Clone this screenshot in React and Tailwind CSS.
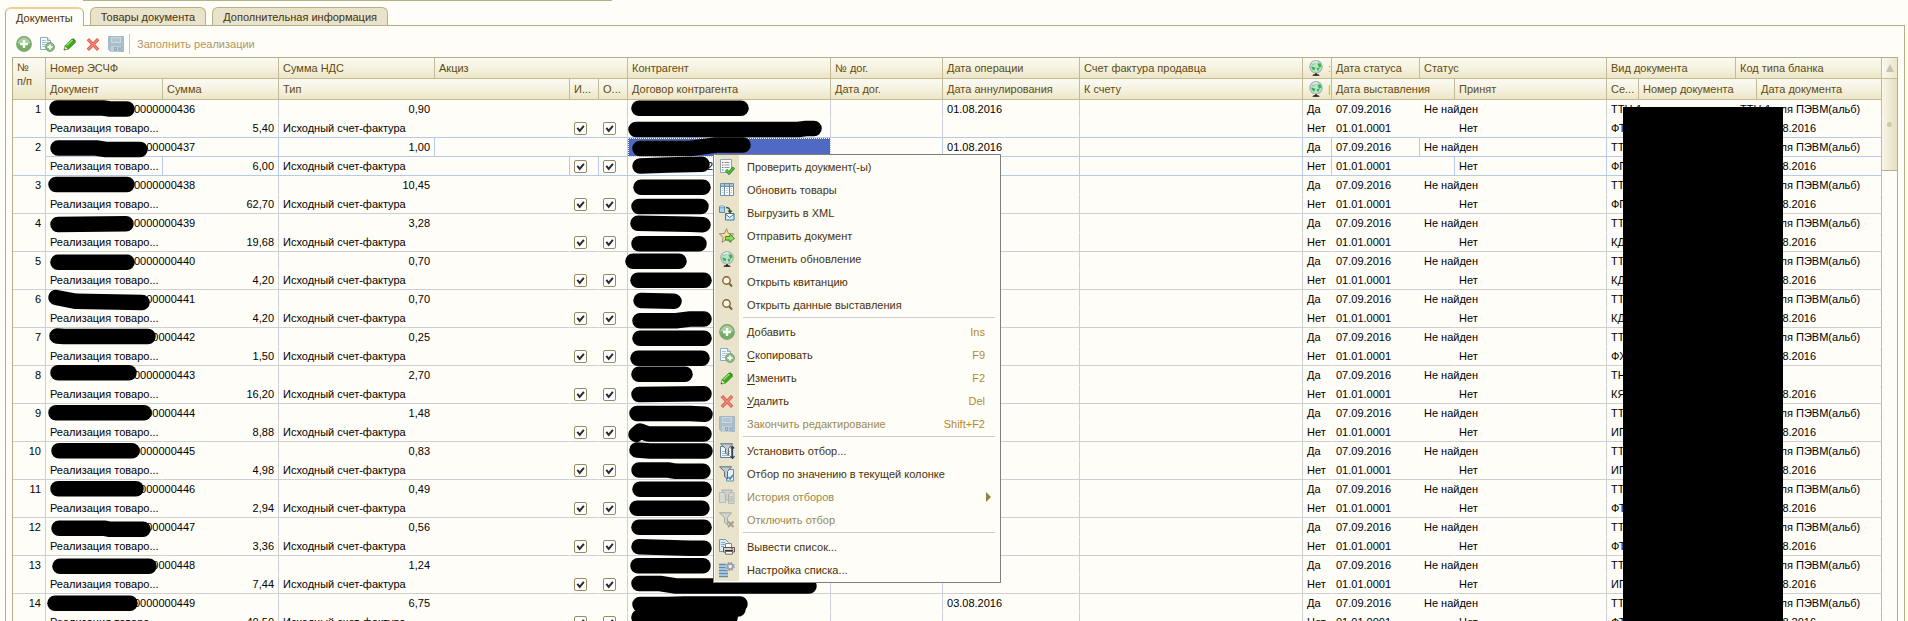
import React from "react";

const rows = [
  { n: 1, num: "0000000436", vat: "0,90", sum: "5,40", date: "01.08.2016", kind: "ТТН-1", ser: "ФТ" },
  { n: 2, num: "0000000437", vat: "1,00", sum: "6,00", date: "01.08.2016", kind: "ТТН-1", ser: "ФП" },
  { n: 3, num: "0000000438", vat: "10,45", sum: "62,70", date: "", kind: "ТТН-1", ser: "ФП" },
  { n: 4, num: "0000000439", vat: "3,28", sum: "19,68", date: "", kind: "ТТН-1", ser: "КД" },
  { n: 5, num: "0000000440", vat: "0,70", sum: "4,20", date: "", kind: "ТТН-1", ser: "КД" },
  { n: 6, num: "0000000441", vat: "0,70", sum: "4,20", date: "", kind: "ТТН-1", ser: "КД" },
  { n: 7, num: "0000000442", vat: "0,25", sum: "1,50", date: "", kind: "ТТН-1", ser: "ФХ" },
  { n: 8, num: "0000000443", vat: "2,70", sum: "16,20", date: "", kind: "ТН-2", ser: "КЯ" },
  { n: 9, num: "0000000444", vat: "1,48", sum: "8,88", date: "", kind: "ТТН-1", ser: "ИП" },
  { n: 10, num: "0000000445", vat: "0,83", sum: "4,98", date: "", kind: "ТТН-1", ser: "ИП" },
  { n: 11, num: "0000000446", vat: "0,49", sum: "2,94", date: "", kind: "ТТН-1", ser: "ФТ" },
  { n: 12, num: "0000000447", vat: "0,56", sum: "3,36", date: "", kind: "ТТН-1", ser: "ФТ" },
  { n: 13, num: "0000000448", vat: "1,24", sum: "7,44", date: "", kind: "ТТН-1", ser: "ИП" },
  { n: 14, num: "0000000449", vat: "6,75", sum: "40,50", date: "03.08.2016", kind: "ТТН-1", ser: "ФТ" },
];

const Svg = ({ children, dim }) => (
  <svg viewBox="0 0 16 16" className={dim ? "block size-4 shrink-0 opacity-50" : "block size-4 shrink-0"} aria-hidden="true">
    {children}
  </svg>
);

const AddIcon = () => (
  <Svg>
    <circle cx="8" cy="8" r="7.3" fill="#6fb35c" stroke="#8b9a86" strokeWidth="1.2" />
    <path d="M1.6 8a6.4 6.4 0 0 1 12.8 0Q8 5 1.6 8Z" fill="#a5d596" />
    <path d="M8 4v8M4 8h8" stroke="#fff" strokeWidth="2.4" />
  </Svg>
);
const CopyIcon = () => (
  <Svg>
    <path d="M1.500 1.500h7l3 3v9h-10z" fill="#f4f9fd" stroke="#8fabc2" />
    <path d="M8.500 1.500v3h3" fill="#d4e3ef" stroke="#8fabc2" />
    <path d="M3 4.500h4M3 6.500h6M3 8.500h4M3 10.500h3" stroke="#a9c4d8" />
    <circle cx="11" cy="11" r="4.400" fill="#86bf76" stroke="#80967a" />
    <path d="M11 8.500v5M8.500 11h5" stroke="#fff" strokeWidth="1.800" />
  </Svg>
);
const PencilIcon = () => (
  <Svg>
    <path d="M2 14l1.200-4.500 6.800-6.500 3.500 3.300-7 6.700z" fill="#3fa81f" stroke="#2c7a18" strokeWidth=".8" />
    <path d="M4.500 9.500L10.500 4" stroke="#9be07a" strokeWidth="1.400" />
    <path d="M10 3l1.400-.8 2.500 2.600-.6 1.500z" fill="#2f8f1c" />
    <path d="M2 14l1-3.700 2.800 2.700z" fill="#f0e6b8" />
    <path d="M2 14l.5-1.600 1.200 1.200z" fill="#222" />
  </Svg>
);
const DeleteIcon = () => (
  <Svg>
    <path d="M4 4.300l8 8.400M12 4.300l-8 8.400" stroke="#cf5a49" strokeWidth="3.300" strokeLinecap="square" />
    <path d="M4 4.300l8 8.400M12 4.300l-8 8.400" stroke="#f48275" strokeWidth="1.900" strokeLinecap="square" />
  </Svg>
);
const SaveIcon = () => (
  <Svg>
    <path d="M.5.5h15v15h-13l-2-2z" fill="#a9bfcb" stroke="#a3b8c4" />
    <path d="M3 1h10v6H3z" fill="#cad7de" />
    <path d="M4 3h8M4 5h8" stroke="#9fb4c1" />
    <path d="M3 10h10v6H3z" fill="#c0ced7" />
    <path d="M6.500 11.500h2v3h-2zM11 11v4.500M14 11l-2.500 2.200L14 15.500" fill="none" stroke="#8ba2b1" />
  </Svg>
);
const CheckDocIcon = () => (
  <Svg>
    <path d="M1.500.5h11v13h-11z" fill="#f7fbfd" stroke="#8aa5b8" />
    <path d="M3 3.500h1.500M3 8.500h1.500" stroke="#d0503c" strokeWidth="1.200" />
    <path d="M3 6h1.500M3 11h1.500" stroke="#4a9a3a" strokeWidth="1.200" />
    <path d="M5.500 3.500h5M5.500 6h5M5.500 8.500h5" stroke="#8b98a2" />
    <path d="M7 11l3 3 5-5.500" fill="none" stroke="#2f7d1d" strokeWidth="3" />
    <path d="M7 11l3 3 5-5.500" fill="none" stroke="#58bb35" strokeWidth="1.800" />
  </Svg>
);
const TableIcon = () => (
  <Svg>
    <path d="M1.500 1.500h13v12h-13z" fill="#fbfdfe" stroke="#6d8fa6" />
    <path d="M2 2h12v2H2z" fill="#a9c3d5" />
    <path d="M2 4.500h12M5.500 2v11M10.500 2v11" stroke="#6d8fa6" />
    <path d="M3 6.500h1.500M3 8.500h1.500M3 10.500h1.500M7 6.500h2M7 8.500h2M7 10.500h2M11.500 6.500H13M11.500 8.500H13M11.500 10.500H13" stroke="#b7cbd9" />
  </Svg>
);
const ExportIcon = () => (
  <Svg>
    <path d="M.5 1.500h5v6h-5z" fill="#a9d3ee" stroke="#5b8aae" />
    <ellipse cx="3" cy="1.800" rx="2.500" ry="1" fill="#d8ecf8" stroke="#5b8aae" strokeWidth=".7" />
    <path d="M7 2.500q4 0 4 4" fill="none" stroke="#3d5a34" strokeWidth="1.400" />
    <path d="M8.500 5.500h5L11 8.800z" fill="#2f4f28" />
    <path d="M6.500 8.500h8.500v6.500H6.500z" fill="#d9ecf7" stroke="#3e7299" />
    <path d="M6.500 9l4.200 3.500L15 9" fill="#fff" stroke="#3e7299" />
  </Svg>
);
const StarIcon = () => (
  <Svg>
    <path d="M7.500.8l2 4.700 5.200.4-4 3.400 1.300 5-4.500-2.800L3 14.300l1.200-5L.3 5.900l5.100-.4z" fill="#f6dc96" stroke="#918a76" />
    <path d="M6.500 8.500H11V6.300l4.500 4L11 14.200V12H6.500z" fill="#8fdc5d" stroke="#3f8a26" />
  </Svg>
);
const GlobeIcon = () => (
  <Svg>
    <circle cx="8" cy="6.800" r="6.200" fill="#c3ddd3" stroke="#a3b3aa" strokeWidth="1.200" />
    <path d="M3.500 3.800Q5.500 1.500 8 2L7 4.200 4.500 5.500z" fill="#8fd0a2" />
    <path d="M9.500 3.500l3 0 1 3-2.500 1.500zM3 6.500l4.200 1-.7 3-1.800-.7zM8.500 8h3L10 11.500z" fill="#2fb846" />
    <path d="M4.500 3.500a5 4 0 0 1 5-1.500" fill="none" stroke="#f1faf5" strokeWidth="1.200" />
    <path d="M7 13h2v1.300H7z" fill="#555" />
    <path d="M4.500 15.800Q4.500 14 8 14t3.500 1.800z" fill="#111" />
  </Svg>
);
const SearchIcon = () => (
  <Svg>
    <circle cx="7.500" cy="6.500" r="3.700" fill="#fbf6e6" stroke="#80602c" strokeWidth="1.400" />
    <path d="M10.200 9.500L13 12.500" stroke="#80602c" strokeWidth="2" />
  </Svg>
);
const Funnel = () => <path d="M.5.8h12L8.500 5.500V13l-3-2.500v-5z" fill="#c1cad0" stroke="#5f6d78" />;
const FilterSetIcon = () => (
  <Svg>
    <path d="M1.500 3.500h11v11h-11z" fill="#f3f8fb" stroke="#5e7f98" />
    <path d="M3 8.500h8M3 10.500h8M3 12.500h8" stroke="#9fb6c6" />
    <path d="M1.500.8h12L9.500 5.500V12l-3-2V5.500z" fill="#c4ccd2" stroke="#5f6d78" />
    <path d="M13.500 4v11M11.500 13l2 2.500 2-2.500M11.800 5.500l1.700-2 1.700 2" fill="none" stroke="#2e3d52" strokeWidth="1.200" />
  </Svg>
);
const FilterValueIcon = () => (
  <Svg>
    <path d="M7.500 3.500h7v11.500h-7z" fill="#e6f2fa" stroke="#5b8fb3" />
    <path d="M9.500 11l1.500 2 3-4" fill="none" stroke="#3c82b5" strokeWidth="1.500" />
    <Funnel />
  </Svg>
);
const FilterHistoryIcon = () => (
  <Svg dim>
    <path d="M.5 3.500h6v10h-6zM9.500 3.500h5.500v11H9.500z" fill="#c2d0da" stroke="#8196a6" />
    <path d="M10.500 8h3.500M10.500 10h3.500M10.500 12h3.500" stroke="#6f8797" />
    <path d="M2.500 1h11L9.500 5.500V12l-3-2V5.500z" fill="#b9c3ca" stroke="#6d7f8c" />
  </Svg>
);
const FilterOffIcon = () => (
  <Svg dim>
    <Funnel />
    <path d="M9 9.500l5.500 5.500M14.500 9.500L9 15" stroke="#64594a" strokeWidth="2" />
  </Svg>
);
const PrintListIcon = () => (
  <Svg>
    <path d="M.5.5h6l3 3v9h-9z" fill="#dcecf7" stroke="#6d9bbd" />
    <path d="M2 3.500h4M2 5.500h5M2 7.500h3" stroke="#7fa9c7" />
    <path d="M6.500 4.500h6v4h-6z" fill="#fff" stroke="#8a8a8a" />
    <path d="M4.500 8.500h11v4.500h-11z" fill="#d6d2ca" stroke="#5e5a55" />
    <path d="M6 11h8v1.500H6z" fill="#3b2d2b" />
    <path d="M6.500 12.500h7v2.700h-7z" fill="#fff" stroke="#6e6a66" />
    <path d="M12 9.800h2" stroke="#c33" />
  </Svg>
);
const ListSettingsIcon = () => (
  <Svg>
    <path d="M0 2h9v13H0z" fill="#bcd9ec" />
    <path d="M0 2.500h9M0 5.500h9M0 8.500h9M0 11.500h9M0 14.500h9" stroke="#5e8cab" strokeWidth="1.400" />
    <circle cx="11.200" cy="4.500" r="4.900" fill="#fffdf8" opacity=".6" />
    <circle cx="11.200" cy="4.500" r="2.700" fill="none" stroke="#9aa3ab" strokeWidth="2" />
    <circle cx="11.200" cy="4.500" r="4.100" fill="none" stroke="#8f9aa3" strokeWidth="1.100" strokeDasharray="1.700 1.520" />
  </Svg>
);

const menu = [
  { icon: CheckDocIcon, text: "Проверить доукмент(-ы)" },
  { icon: TableIcon, text: "Обновить товары" },
  { icon: ExportIcon, text: "Выгрузить в XML" },
  { icon: StarIcon, text: "Отправить документ" },
  { icon: GlobeIcon, text: "Отменить обновление" },
  { icon: SearchIcon, text: "Открыть квитанцию" },
  { icon: SearchIcon, text: "Открыть данные выставления" },
  null,
  { icon: AddIcon, text: "Добавить", hot: true, keys: "Ins" },
  { icon: CopyIcon, text: "Скопировать", hot: true, keys: "F9" },
  { icon: PencilIcon, text: "Изменить", hot: true, keys: "F2" },
  { icon: DeleteIcon, text: "Удалить", hot: true, keys: "Del" },
  { icon: SaveIcon, text: "Закончить редактирование", off: true, keys: "Shift+F2" },
  null,
  { icon: FilterSetIcon, text: "Установить отбор..." },
  { icon: FilterValueIcon, text: "Отбор по значению в текущей колонке" },
  { icon: FilterHistoryIcon, text: "История отборов", off: true, sub: true },
  { icon: FilterOffIcon, text: "Отключить отбор", off: true },
  null,
  { icon: PrintListIcon, text: "Вывести список..." },
  { icon: ListSettingsIcon, text: "Настройка списка..." },
];

function ContextMenu() {
  return (
    <div role="menu" className="absolute left-[713px] top-[154px] z-20 w-[288px] border border-[#7f7f7f] bg-[#fffdf8] px-px pb-px text-[#46320c]">
      {menu.map((m, i) =>
        m === null ? (
          <div key={i} role="separator" className="flex h-1">
            <div className="w-6 bg-[#e9e3cb]" />
            <div className="ml-1 mr-1 mt-px h-px grow bg-[#c9cdd0]" />
          </div>
        ) : (
          <button key={i} type="button" role="menuitem" disabled={m.off} className="flex h-[23px] w-full items-stretch text-left">
            <span className="flex w-6 items-center justify-center bg-[#e9e3cb]">
              <m.icon />
            </span>
            <span className={m.off ? "flex grow items-center pl-2 text-[#9a8a50]" : "flex grow items-center pl-2"}>
              {m.hot ? (
                <span>
                  <u className="underline-offset-2">{m.text[0]}</u>
                  {m.text.slice(1)}
                </span>
              ) : (
                m.text
              )}
            </span>
            {m.keys && <span className="flex items-center pr-[14px] text-[#b5891c]">{m.keys}</span>}
            {m.sub && (
              <svg viewBox="0 0 5 10" className="mr-2 h-[10px] w-[5px] self-center" aria-hidden="true">
                <path d="M0 0l5 5-5 5z" fill="#94813c" />
              </svg>
            )}
          </button>
        )
      )}
    </div>
  );
}

const head = "h-[21px] overflow-hidden whitespace-nowrap border-b border-r border-[#c3bb96] bg-linear-to-b from-[#faf9f0] from-10% via-[#f5f2e0] via-50% to-[#ede6c6] px-1 text-left font-normal text-[#634a10]";

const Th = ({ children, ...p }) => (
  <th className={`${head} align-middle`} {...p}>
    {children}
  </th>
);

const GlobeTh = ({ label, hint }) => (
  <Th>
    <span className="flex items-center gap-1 pl-px text-[#d9a441]" aria-label={label}>
      <GlobeIcon />
      {hint}
    </span>
  </Th>
);

function Check({ label }) {
  return (
    <label className="grid size-[13px]">
      <input type="checkbox" defaultChecked aria-label={label} className="peer col-start-1 row-start-1 size-[13px] appearance-none rounded-[2px] border border-[#968a62] bg-white" />
      <svg viewBox="0 0 13 13" className="pointer-events-none invisible col-start-1 row-start-1 size-[13px] peer-checked:visible" aria-hidden="true">
        <path d="M3.300 5.800l2.400 3 4.200-5" fill="none" stroke="#2b2b2b" strokeWidth="2" />
      </svg>
    </label>
  );
}

function Record({ r }) {
  const sel = r.n === 2;
  const last = sel || r.n === 1 ? "border-b-[#b5cbe6]" : "border-b-[#cdd0d3]";
  const outer = sel ? "border-r-[#b5cbe6]" : "border-r-[#cdd0d3]";
  const inner = sel ? "border-r-[#b5cbe6]" : "border-r-transparent";
  const mid = sel ? "border-b-[#b5cbe6]" : "border-b-[#fffdf8]";
  const base = "h-[19px] whitespace-nowrap border-b border-r px-1 align-middle";
  const a = (edge, extra = "") => `${base} ${mid} ${edge} ${extra}`;
  const b = (edge, extra = "") => `${base} ${last} ${edge} ${extra}`;
  return (
    <tbody>
      <tr>
        <td rowSpan={2} className={`border-b border-r px-1 text-right align-top leading-[18px] ${last} border-r-[#cdd0d3]`}>{r.n}</td>
        <td colSpan={2} className={a(outer)}>
          <span className="inline-block w-[84px]" />
          {r.num}
        </td>
        <td className={a(inner, "text-right")}>{r.vat}</td>
        <td colSpan={3} className={a(outer)} />
        <td className={sel ? a(outer, "bg-[#5069c3] outline-1 -outline-offset-1 outline-dotted outline-white") : a(outer)} />
        <td className={a(outer)} />
        <td className={a(outer)}>{r.date}</td>
        <td className={a(outer)} />
        <td className={a(inner)}>Да</td>
        <td className={a(inner)}>07.09.2016</td>
        <td colSpan={2} className={a(outer)}>Не найден</td>
        <td colSpan={2} className={a("border-r-transparent")}>{r.kind}</td>
        <td colSpan={2} className={a("border-r-[#c3bb96]")}>{r.n === 8 ? "ТН-2" : "ТТН-1 для ПЭВМ(альб)"}</td>
      </tr>
      <tr>
        <td className={b(inner)}>Реализация товаро...</td>
        <td className={b(outer, "text-right")}>{r.sum}</td>
        <td colSpan={2} className={b(inner)}>Исходный счет-фактура</td>
        <td className={b(inner)}><Check label={`И, строка ${r.n}`} /></td>
        <td className={b(outer)}><Check label={`О, строка ${r.n}`} /></td>
        <td className={b(outer)}>
          {sel && <span className="inline-block pl-[75px]">2</span>}
        </td>
        <td className={b(outer)} />
        <td className={b(outer)} />
        <td className={b(outer)} />
        <td className={b(inner)}>Нет</td>
        <td colSpan={2} className={b(inner)}>01.01.0001</td>
        <td className={b(outer)}>Нет</td>
        <td className={b("border-r-transparent")}>{r.ser}</td>
        <td colSpan={2} className={b("border-r-transparent")} />
        <td className={b("border-r-[#c3bb96]")}>01.08.2016</td>
      </tr>
    </tbody>
  );
}

const strokes = [
  "M57 108H103L110 109H127", "M58 148H96L106 149.500H140", "M56 184.500H127", "M58 224.500L126 223.800",
  "M58 262.300H127", "M56 297.500L76 301.300L142 302.500", "M57 336L64 336.500H148", "M58 372.700H129",
  "M56 412.700H144", "M59 450.700H132", "M58 488.700H136", "M59 528.300H105L110 529.300H143",
  "M60 566.300H149", "M55 603.300H130",
  "M639 108.300H741", "M636 129.500H798L806 128.500H814", "M640 148.500H690L716 145H743", "M640 166L668 165L702 164.300",
  "M641 187.300H703", "M639 206.500H701", "M638 223.300L690 224.300L703 224.700", "M639 243.700H699",
  "M633 261.300H679", "M638 280.300H704", "M641 300.500L674 301.300", "M640 320.700H676L690 319H704",
  "M640 338.300H704", "M638 358.300H702", "M639 374.300H685", "M639 394.500L704 393.800",
  "M637 413.500H690L705 414.300", "M636 434.500L640 431L648 434H704", "M637 450L650 451H705", "M639 470H668L676 471.300H703",
  "M640 489.300H704", "M637 508.300H702", "M639 527.300H704", "M639 546.700L690 548.300H704",
  "M638 565.700H703", "M639 583.500H660L676 586H809", "M640 604.500H668L684 604H740", "M684 609H738", "M639 617.300H730",
];

export default function App() {
  const tab = "rounded-t-md border border-b-0 border-[#b8ae86] px-[10px] text-[#46320c]";
  return (
    <div className="relative flex h-screen flex-col overflow-hidden bg-[#fffdf8] pl-[5px] pr-[3px] pt-[7px] font-['Liberation_Sans',Arial,sans-serif] text-[11px] leading-[14px] text-black">
      <div className="absolute left-[83px] top-0 h-px w-[529px] bg-[#b8ae86]" />

      <div role="tablist" className="flex items-end gap-[6px]">
        <button type="button" role="tab" aria-selected="true" className={`${tab} relative z-10 -mb-px h-[19px] border-t-2 border-t-[#f0cf94] bg-[#fffdf8]`}>Документы</button>
        <button type="button" role="tab" aria-selected="false" className={`${tab} h-[18px] bg-[#e9e3cb]`}>Товары документа</button>
        <button type="button" role="tab" aria-selected="false" className={`${tab} h-[18px] bg-[#e9e3cb]`}>Дополнительная информация</button>
      </div>

      <main className="flex min-h-0 grow flex-col border border-b-0 border-[#b8ae86] px-[6px]">
        <div className="flex items-center gap-[7px] pb-[5px] pl-1 pt-[10px]">
          <button type="button" aria-label="Добавить"><AddIcon /></button>
          <button type="button" aria-label="Скопировать"><CopyIcon /></button>
          <button type="button" aria-label="Изменить"><PencilIcon /></button>
          <button type="button" aria-label="Удалить"><DeleteIcon /></button>
          <button type="button" aria-label="Закончить редактирование"><SaveIcon /></button>
          <button type="button" className="-my-1 -ml-0.5 h-5 border-l border-[#cfc8aa] pl-[7px] text-[#b09660]">Заполнить реализации</button>
        </div>

        <div className="flex min-h-0 grow overflow-hidden border border-b-0 border-[#b8ae86]">
          <div className="min-w-0 grow overflow-hidden">
            <table className="w-full table-fixed border-separate border-spacing-0">
              <colgroup>
                <col className="w-[33px]" />
                <col className="w-[117px]" />
                <col className="w-[116px]" />
                <col className="w-[156px]" />
                <col className="w-[135px]" />
                <col className="w-[29px]" />
                <col className="w-[29px]" />
                <col className="w-[203px]" />
                <col className="w-[112px]" />
                <col className="w-[137px]" />
                <col />
                <col className="w-[29px]" />
                <col className="w-[88px]" />
                <col className="w-[35px]" />
                <col className="w-[152px]" />
                <col className="w-[32px]" />
                <col className="w-[97px]" />
                <col className="w-[21px]" />
                <col className="w-[125px]" />
              </colgroup>
              <thead>
                <tr>
                  <th rowSpan={2} className={`${head} align-top pt-[2px]`}>
                    <div className="flex flex-col">
                      <span>№</span>
                      <span>п/п</span>
                    </div>
                  </th>
                  <Th colSpan={2}>Номер ЭСЧФ</Th>
                  <Th>Сумма НДС</Th>
                  <Th colSpan={3}>Акциз</Th>
                  <Th>Контрагент</Th>
                  <Th>№ дог.</Th>
                  <Th>Дата операции</Th>
                  <Th>Счет фактура продавца</Th>
                  <GlobeTh label="Загружен" hint=":" />
                  <Th>Дата статуса</Th>
                  <Th colSpan={2}>Статус</Th>
                  <Th colSpan={2}>Вид документа</Th>
                  <Th colSpan={2}>Код типа бланка</Th>
                </tr>
                <tr>
                  <Th>Документ</Th>
                  <Th>Сумма</Th>
                  <Th colSpan={2}>Тип</Th>
                  <Th>И...</Th>
                  <Th>О...</Th>
                  <Th>Договор контрагента</Th>
                  <Th>Дата дог.</Th>
                  <Th>Дата аннулирования</Th>
                  <Th>К счету</Th>
                  <GlobeTh label="Выставлен" hint="|" />
                  <Th colSpan={2}>Дата выставления</Th>
                  <Th>Принят</Th>
                  <Th>Се...</Th>
                  <Th colSpan={2}>Номер документа</Th>
                  <Th>Дата документа</Th>
                </tr>
              </thead>
              {rows.map((r) => (
                <Record key={r.n} r={r} />
              ))}
            </table>
          </div>
          <div className="flex w-[15px] shrink-0 flex-col">
            <div className="flex h-[21px] items-center justify-center border-b border-[#c3bb96] bg-linear-to-r from-[#faf9f0] to-[#ede6c6]">
              <svg viewBox="0 0 8 8" className="size-2" aria-hidden="true"><path d="M4 0l4 8H0z" fill="#c6c3b4" /></svg>
            </div>
            <div className="flex h-[92px] items-center justify-center border-b border-[#b8ae86] bg-linear-to-r from-[#f8f6e8] to-[#e6dfc0]">
              <span className="size-[5px] rounded-full bg-[#cfc8aa]" />
            </div>
          </div>
        </div>
      </main>

      <svg className="pointer-events-none absolute inset-0 z-10 h-full w-full" aria-hidden="true">
        {strokes.map((d) => (
          <path key={d} d={d} fill="none" stroke="#000" strokeWidth="15.500" strokeLinecap="round" strokeLinejoin="round" />
        ))}
      </svg>
      <div className="absolute bottom-0 right-[125px] top-[107px] z-10 w-[160px] bg-black" />
      <ContextMenu />
    </div>
  );
}
